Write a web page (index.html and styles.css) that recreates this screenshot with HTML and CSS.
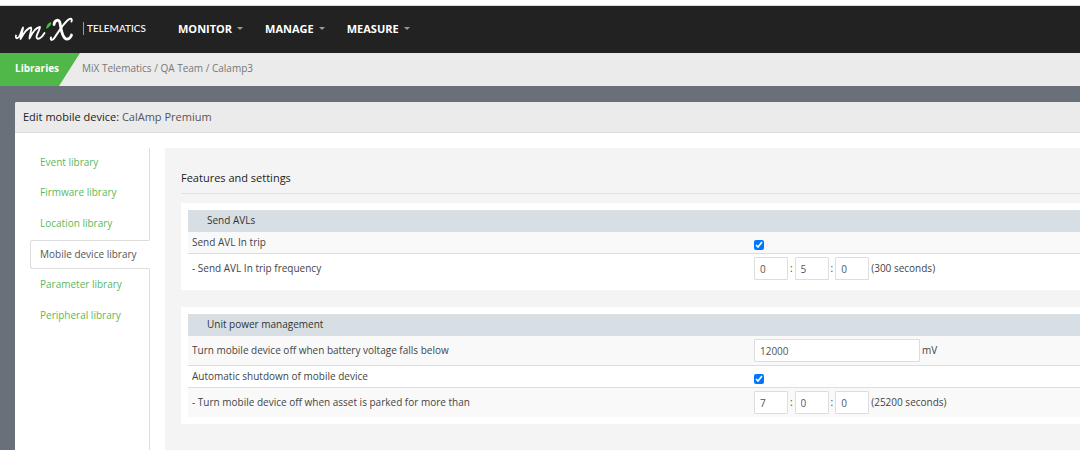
FILE: index.html
```html
<!DOCTYPE html>
<html lang="en">
<head>
<meta charset="utf-8">
<title>Edit mobile device</title>
<link rel="stylesheet" href="styles.css">
</head>
<body>
<header class="topbar">
  <a class="brand" href="#" aria-label="MiX Telematics">
    <svg class="brand-mark" viewBox="0 0 60 28" aria-hidden="true">
      <g fill="none" stroke="#fff" stroke-linecap="round" stroke-linejoin="round">
        <path stroke-width="1.800" d="M1 20.500C0 24 3 24.500 5 20C6.500 16.500 7 14 8 12.500C8 16 6 20 5.500 24C8.500 18.500 12 13 16 12.500C17.500 13.500 14.500 19 14.500 23.500C17 18 20.500 12.500 25 12C25 15 21.500 19 21.500 22C22 25.500 26.500 23.500 29.500 18"/>
        <path stroke-width="2.800" d="M39 9.500C39.500 5 44 3.500 45 8C46 13 46.500 22 51 24C53.500 24.500 56 22.500 56.500 20"/>
        <path stroke-width="2" d="M56.500 6.500C57.500 3.500 56 3 53.500 4.500C48 9 44 16 40 22C38 25.500 35 26 36 22.500"/>
      </g>
      <path fill="#4fb848" d="M31 14C31.500 10.500 33 8 36 7C37 9.500 34.500 12 31 14Z"/>
    </svg>
    <span class="brand-name">TELEMATICS</span>
  </a>
  <nav class="menu">
    <button class="menu-item" type="button">MONITOR</button>
    <button class="menu-item" type="button">MANAGE</button>
    <button class="menu-item" type="button">MEASURE</button>
  </nav>
</header>
<div class="crumbs">
  <a class="section" href="#">Libraries</a>
  <span class="trail">MiX Telematics / QA Team / Calamp3</span>
</div>
<main class="panel">
  <h1 class="panel-title"><span class="strong">Edit mobile device:</span> CalAmp Premium</h1>
  <div class="panel-body">
    <nav class="side">
      <ul class="tabs">
        <li class="tab"><a href="#">Event library</a></li>
        <li class="tab"><a href="#">Firmware library</a></li>
        <li class="tab"><a href="#">Location library</a></li>
        <li class="tab active"><a href="#" aria-current="page">Mobile device library</a></li>
        <li class="tab"><a href="#">Parameter library</a></li>
        <li class="tab"><a href="#">Peripheral library</a></li>
      </ul>
    </nav>
    <section class="content">
      <h2 class="heading">Features and settings</h2>
      <div class="card">
        <table class="settings">
          <colgroup><col class="name"><col></colgroup>
          <thead><tr><th colspan="2">Send AVLs</th></tr></thead>
          <tbody>
            <tr>
              <td><label for="avl">Send AVL In trip</label></td>
              <td><input class="check" type="checkbox" id="avl" checked></td>
            </tr>
            <tr class="tall">
              <td><label for="avl-h">- Send AVL In trip frequency</label></td>
              <td><div class="fields"><input class="box" id="avl-h" value="0"><span>:</span><input class="box" aria-label="Minutes" value="5"><span>:</span><input class="box" aria-label="Seconds" value="0"><span>(300 seconds)</span></div></td>
            </tr>
          </tbody>
        </table>
      </div>
      <div class="card">
        <table class="settings">
          <colgroup><col class="name"><col></colgroup>
          <thead><tr><th colspan="2">Unit power management</th></tr></thead>
          <tbody>
            <tr class="tall">
              <td><label for="volt">Turn mobile device off when battery voltage falls below</label></td>
              <td><div class="fields"><input class="box wide" id="volt" value="12000"><span>mV</span></div></td>
            </tr>
            <tr>
              <td><label for="auto">Automatic shutdown of mobile device</label></td>
              <td><input class="check" type="checkbox" id="auto" checked></td>
            </tr>
            <tr class="tall">
              <td><label for="park-h">- Turn mobile device off when asset is parked for more than</label></td>
              <td><div class="fields"><input class="box" id="park-h" value="7"><span>:</span><input class="box" aria-label="Minutes" value="0"><span>:</span><input class="box" aria-label="Seconds" value="0"><span>(25200 seconds)</span></div></td>
            </tr>
          </tbody>
        </table>
      </div>
    </section>
  </div>
</main>
</body>
</html>
```
FILE: styles.css
```css
* { box-sizing: border-box; }
html { min-height: 100%; background: #69707a; }
body {
  margin: 0;
  min-height: 100vh;
  display: flex;
  flex-direction: column;
  border-top: 5px solid #fff;
  font: 10px/14px "Open Sans", "Noto Sans", sans-serif;
  color: #555;
}
a { color: inherit; text-decoration: none; }

.topbar {
  display: flex;
  align-items: center;
  min-height: 48px;
  padding: 0 0 2px 15px;
  background: #222;
  border-top: 1px solid #d5ddd5;
}
.brand { display: flex; align-items: center; width: 155px; color: #fff; }
.brand-mark { width: 60px; height: 28px; flex: none; }
.brand-name {
  margin-left: 8px;
  padding-left: 3px;
  border-left: 1px solid #999;
  font: 500 10px/13px Lato, sans-serif;
}
.menu { display: flex; gap: 8px; }
.menu-item {
  display: flex;
  align-items: center;
  gap: 5px;
  padding: 0 6px 0 8px;
  border: 0;
  background: none;
  color: #fff;
  font: 700 11px/16px "Open Sans", sans-serif;
}
.menu-item::after {
  content: "";
  border: 3px solid transparent;
  border-top-color: #999;
  border-bottom: 0;
}

.crumbs { display: flex; padding-bottom: 2px; background: #ebebeb; line-height: 31px; color: #777; }
.section {
  width: 80px;
  margin-bottom: -2px;
  padding-left: 15px;
  background: #4fb848;
  color: #fff;
  font-weight: 700;
  clip-path: polygon(0 0, 100% 0, 59px 100%, 0 100%);
}
.trail { padding-left: 2px; }

.panel { flex: 1; display: flex; flex-direction: column; margin: 16px 0 0 15px; background: #fff; border-top-left-radius: 2px; }
.panel-title {
  margin: 0;
  padding: 0 8px;
  background: #ebebeb;
  border-bottom: 1px solid #ddd;
  font-size: 11px;
  font-weight: 400;
  line-height: 30px;
  border-top-left-radius: 2px;
}
.strong { color: #222; }
.panel-body { flex: 1; display: flex; padding-top: 15px; }

.side { width: 135px; padding-left: 15px; border-right: 1px solid #ddd; }
.tabs { display: grid; grid-auto-rows: 1fr; align-items: center; height: 184px; margin: -1px 0 0; padding: 0; list-style: none; }
.tab { padding: 0 10px; color: #5cb85c; line-height: 27px; white-space: nowrap; }
.tab a { display: block; }
.active {
  margin-right: -1px;
  padding-left: 9px;
  background: #fff;
  border: 1px solid #ddd;
  border-right-color: #fff;
  border-radius: 3px 0 0 3px;
  color: #555;
}

.content { flex: 1; margin-left: 15px; padding: 15px 0 27px 16px; background: #f4f4f4; }
.heading {
  margin: 0 0 9px;
  border-bottom: 1px solid #e2e2e2;
  color: #222;
  font-size: 11px;
  font-weight: 400;
  line-height: 30px;
}
.card { padding: 7px 0 7px 7px; background: #fff; }
.card + .card { margin-top: 17px; }
.settings { width: 100%; border-collapse: separate; border-spacing: 0; table-layout: fixed; }
.name { width: 63%; }
.settings th {
  height: 22px;
  padding: 0 19px 2px;
  background: #d7dfe5;
  color: #333;
  font-weight: 400;
  text-align: left;
}
.settings td { height: 22px; padding: 0 4px; border-bottom: 1px solid #ddd; color: #444; }
.settings td:first-child { padding-bottom: 2px; }
.settings .tall td { height: 30px; }
.settings tbody tr:nth-child(odd) { background: #f9f9f9; }
.settings tbody tr:last-child td { height: 29px; border-bottom: 0; }
.fields { display: flex; align-items: center; gap: 2px; }
.fields span { padding-bottom: 2px; }
.box {
  width: 34px;
  height: 23px;
  padding: 0 5px;
  border: 1px solid #ddd;
  border-radius: 1px;
  background: #fff;
  color: #555;
  font: inherit;
}
.wide { width: 166px; }
.check { display: block; width: 10px; height: 10px; margin: 4px 0 0; }
```
